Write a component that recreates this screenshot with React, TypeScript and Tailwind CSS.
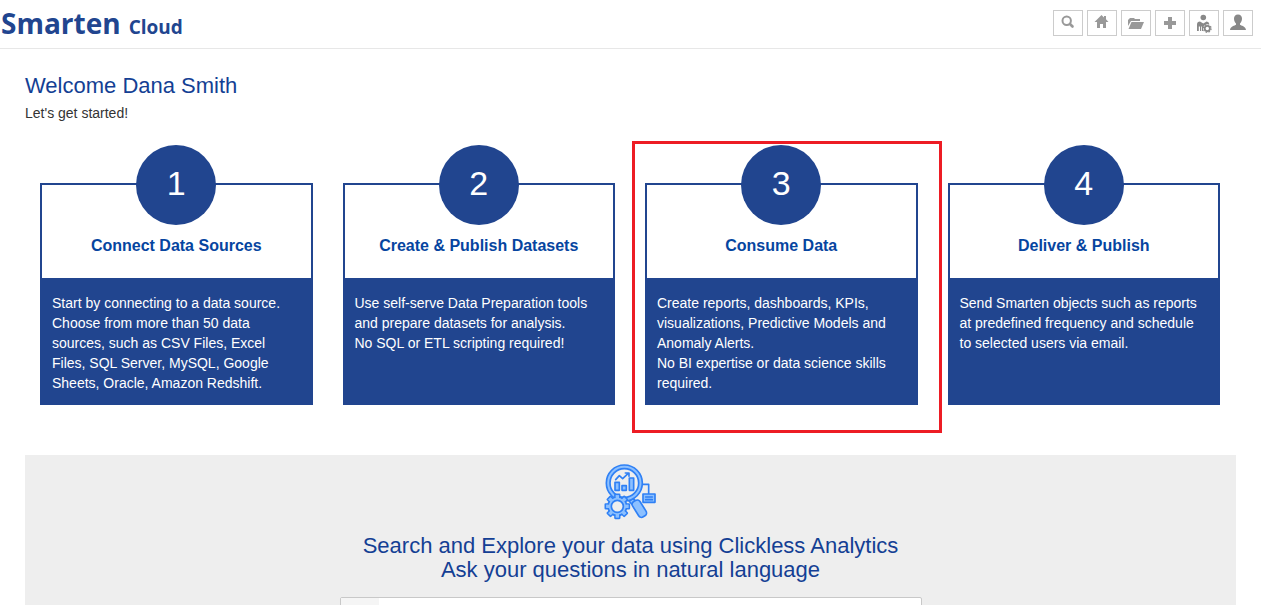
import type { ReactNode } from 'react'

type Step = {
  title: string
  lines: string[]
  highlighted?: boolean
}

const steps: Step[] = [
  {
    title: 'Connect Data Sources',
    lines: [
      'Start by connecting to a data source. Choose from more than 50 data sources, such as CSV Files, Excel Files, SQL Server, MySQL, Google Sheets, Oracle, Amazon Redshift.',
    ],
  },
  {
    title: 'Create & Publish Datasets',
    lines: [
      'Use self-serve Data Preparation tools and prepare datasets for analysis.',
      'No SQL or ETL scripting required!',
    ],
  },
  {
    title: 'Consume Data',
    lines: [
      'Create reports, dashboards, KPIs, visualizations, Predictive Models and Anomaly Alerts.',
      'No BI expertise or data science skills required.',
    ],
    highlighted: true,
  },
  {
    title: 'Deliver & Publish',
    lines: [
      'Send Smarten objects such as reports at predefined frequency and schedule to selected users via email.',
    ],
  },
]

const toolbar: { label: string; icon: ReactNode }[] = [
  {
    label: 'Search',
    icon: (
      <>
        <circle cx="12.7" cy="9.7" r="4.2" fill="none" stroke="currentColor" strokeWidth="2" />
        <path d="M16 13l2.500 2.500" stroke="currentColor" strokeWidth="2.6" strokeLinecap="round" />
      </>
    ),
  },
  {
    label: 'Home',
    icon: <path d="M13.5 4l2.5 2.4V5h2v3.3l2.5 2.7H18v6h-3v-4h-3v4H9v-6H6.5z" />,
  },
  {
    label: 'Open',
    icon: (
      <>
        <path d="M6 9l2-2h4l1 1h5v2H9l-3 5z" />
        <path d="M9.5 11H22l-3 7H6.500z" />
      </>
    ),
  },
  {
    label: 'New',
    icon: <path d="M12 6h4v4h4v4h-4v4h-4v-4H8v-4h4z" />,
  },
  {
    label: 'Administration',
    icon: (
      <g className="text-[#888]" fill="currentColor" stroke="none">
        <circle cx="13.3" cy="6.5" r="2.8" />
        <path d="M7 20v-6.5Q7 10.5 10 10.5l3.3 2 3.3-2q2.400 0 2.700 2.500-5.500-.3-6.300 4.500V20h-1.200v-4.500H11V20h-1v-4.500H8.800V20z" />
        <circle cx="17.3" cy="17.5" r="2.6" fill="none" stroke="currentColor" strokeWidth="1.8" />
        <circle
          cx="17.3"
          cy="17.5"
          r="3.8"
          fill="none"
          stroke="currentColor"
          strokeWidth="1.2"
          strokeDasharray="1.6 1.38"
        />
      </g>
    ),
  },
  {
    label: 'Profile',
    icon: (
      <path
        className="text-[#888]"
        d="M14 3.500c2.700 0 4 1.700 4 4 0 2.200-.7 3.800-2 4.900v1.300c1 1 5.800 1.300 6 5.300H6c.2-4 5-4.300 6-5.300v-1.300c-1.300-1.100-2-2.700-2-4.900 0-2.300 1.300-4 4-4z"
      />
    ),
  },
]

function Header() {
  return (
    <header className="flex h-[49px] items-start justify-between border-b border-[#e7e7e7] pr-2">
      <a
        href="#"
        className="flex items-baseline gap-2 pl-px font-['Open_Sans',sans-serif] font-bold text-[#21458f]"
      >
        <span className="text-[28px] leading-[46px]">Smarten</span>
        <span className="text-[19px]">Cloud</span>
      </a>
      <nav className="flex gap-1 pt-[10px]">
        {toolbar.map(({ label, icon }) => (
          <button
            key={label}
            type="button"
            aria-label={label}
            className="h-[26px] w-[30px] border border-[#ccc] bg-white text-[#999]"
          >
            <svg viewBox="0 0 28 24" className="h-6 w-7" fill="currentColor">
              {icon}
            </svg>
          </button>
        ))}
      </nav>
    </header>
  )
}

function StepCard({ step, number }: { step: Step; number: number }) {
  return (
    <article className="relative flex flex-col">
      <div className="relative -mb-[42px] flex size-20 items-center justify-center self-center rounded-full bg-[#21458f] pb-1 text-[34px] text-white">
        {number}
      </div>
      <h2 className="border-x-2 border-t-2 border-[#21458f] pt-[51px] pb-[22px] text-center text-base leading-5 font-bold text-[#0645a0]">
        {step.title}
      </h2>
      <div className="grow bg-[#21458f] px-3 pt-[15px] pb-3 text-sm leading-5 text-white">
        {step.lines.map((line) => (
          <p key={line}>{line}</p>
        ))}
      </div>
      {step.highlighted && (
        <div className="pointer-events-none absolute -top-1 -right-6 -bottom-7 -left-[13px] border-3 border-[#ed1c24]" />
      )}
    </article>
  )
}

function AnalyticsIcon() {
  const teeth = [0, 45, 90, 135, 180, 225, 270, 315]

  return (
    <svg
      viewBox="45 27 156 168"
      className="h-14 w-[52px] overflow-visible"
      fill="#8cc0ff"
      stroke="#2f80f5"
      strokeWidth="5"
      strokeLinejoin="round"
      strokeLinecap="round"
    >
      <path d="M157 88h19v28" fill="none" />
      <rect x="159" y="117" width="36" height="25" />
      <path d="M167 126h20M167 134h20" />
      <path d="M117 138l12-8 9 10-12 8z" />
      <rect x="-13" y="-27" width="26" height="54" rx="10" transform="translate(148 161) rotate(-32)" />
      <circle cx="103" cy="84" r="54" />
      <circle cx="103" cy="84" r="43" fill="#eee" />
      <rect x="75" y="82" width="13" height="24" />
      <rect x="96" y="92" width="13" height="14" />
      <rect x="118" y="69" width="13" height="37" />
      <path d="M77 74l11-12 10 9 16-15M106 54h11v10" fill="none" />
      {/* gear: wide outline pass first, then the fill on top */}
      <g transform="translate(82 154)">
        {teeth.map((angle) => (
          <rect key={angle} x="-7" y="-36" width="14" height="14" rx="1" transform={`rotate(${angle})`} />
        ))}
        <circle r="28" />
        {teeth.map((angle) => (
          <rect key={angle} x="-5" y="-33" width="10" height="11" stroke="none" transform={`rotate(${angle})`} />
        ))}
        <circle r="18" fill="#eee" />
      </g>
    </svg>
  )
}

function ClicklessSearch() {
  return (
    <section className="mt-[50px] flex flex-col items-center bg-[#eee] pt-[9px] pb-10">
      <AnalyticsIcon />
      <h2 className="mt-[14px] text-center text-[22px] leading-6 text-[#143f94]">
        Search and Explore your data using Clickless Analytics
        <br />
        Ask your questions in natural language
      </h2>
      <div className="mt-[15px] flex h-10 w-full max-w-[582px] rounded-xs border border-[#c8c8c8] bg-white">
        <div className="w-[38px] bg-[#f5f5f5]" />
        <input type="text" aria-label="Ask a question" className="grow px-3 text-sm outline-none" />
      </div>
    </section>
  )
}

export default function App() {
  return (
    <div className="h-screen overflow-hidden bg-white font-['Liberation_Sans',Arial,sans-serif]">
      <Header />
      <main className="px-[25px] pt-[25px]">
        <h1 className="text-[22px] leading-6 text-[#143f94]">Welcome Dana Smith</h1>
        <p className="mt-[5px] text-sm leading-5 text-[#333]">Let's get started!</p>
        <div className="mt-[22px] grid grid-cols-4 gap-[30px] pr-4 pl-[15px]">
          {steps.map((step, index) => (
            <StepCard key={step.title} step={step} number={index + 1} />
          ))}
        </div>
        <ClicklessSearch />
      </main>
    </div>
  )
}
